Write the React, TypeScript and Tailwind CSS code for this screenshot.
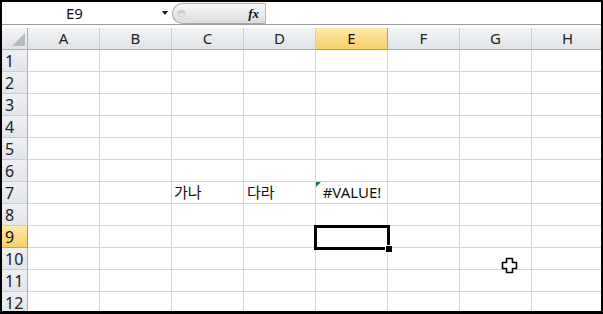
import React from 'react'

const cols = ['A', 'B', 'C', 'D', 'E', 'F', 'G', 'H']
const rows = [1, 2, 3, 4, 5, 6, 7, 8, 9, 10, 11, 12]

const font = { fontFamily: '"Noto Sans", "Noto Sans CJK KR", sans-serif' }

const Cell = ({ row, col }: { row: number; col: string }) => {
  let content: React.ReactNode = null
  if (row === 7 && col === 'C') content = <span className="pl-[2px]">가나</span>
  if (row === 7 && col === 'D') content = <span className="pl-[3px]">다라</span>
  if (row === 7 && col === 'E')
    content = (
      <>
        {/* error indicator */}
        <div className="absolute left-0 top-0 h-0 w-0 border-t-[5px] border-r-[5px] border-t-[#1f7a37] border-r-transparent" />
        <span className="w-full text-center pl-[1px]">#VALUE!</span>
      </>
    )
  return (
    <div className="relative flex h-[22px] items-center border-b border-r border-[#d4d4d4] bg-white text-[15px] leading-none text-[#111]">
      {content}
      {row === 9 && col === 'E' && (
        <div className="absolute -left-[2px] -top-[1px] z-10 h-[25px] w-[76px] border-[3px] border-black">
          <div className="absolute -bottom-[5px] -right-[5px] h-[7px] w-[7px] border-l border-t border-white bg-black" />
        </div>
      )}
    </div>
  )
}

const App: React.FC = () => {
  return (
    <div className="h-[314px] w-[603px] bg-black pt-[2px] pl-[2px] pr-[2px] pb-[3px]" style={font}>
      <div className="relative h-full w-full overflow-hidden bg-white">
        {/* formula bar */}
        <div className="flex h-[23px] border-b border-[#9a9a9a]">
          <div className="flex w-[155px] items-center justify-center pr-[10px] text-[15px] text-[#111]">E9</div>
          <div className="flex w-[15px] items-center justify-center">
            <div className="h-0 w-0 border-l-[3px] border-r-[3px] border-t-[4px] border-l-transparent border-r-transparent border-t-[#111]" />
          </div>
          <div className="relative mt-[1px] flex w-[94px] items-center justify-end rounded-l-full border border-r-[#b8b8b8] border-[#a8a8a8] bg-gradient-to-b from-[#f8f8f8] to-[#dcdcdc] pr-[6px]">
            <div className="absolute left-[4px] top-[6px] h-[7px] w-[9px] rounded-full bg-gradient-to-b from-[#c8c8c8] to-[#eeeeee] border border-[#d0d0d0]" />
            <span className="text-[13px] font-bold italic text-[#111]" style={{ fontFamily: '"Liberation Serif", serif' }}>
              fx
            </span>
          </div>
          <div className="flex-1 bg-white" />
        </div>
        <div className="h-[3px] bg-white" />
        {/* sheet grid */}
        <div className="grid grid-cols-[26px_repeat(8,72px)]">
          <div className="relative h-[22px] border-b border-r border-[#a9afb8] bg-gradient-to-b from-[#f3f4f6] to-[#e0e3e7]">
            <div className="absolute right-[2px] bottom-[3px] h-0 w-0 border-b-[13px] border-l-[13px] border-b-[#b7bbc1] border-l-transparent" />
          </div>
          {cols.map((c) =>
            c === 'E' ? (
              <div
                key={c}
                className="flex h-[22px] items-center justify-center border-b border-r border-b-[#c2913b] border-r-[#c9a35a] bg-gradient-to-b from-[#fdeaa8] to-[#f8cf68] text-[15px] text-[#111]"
              >
                {c}
              </div>
            ) : (
              <div
                key={c}
                className="flex h-[22px] items-center justify-center border-b border-r border-b-[#a9afb8] border-r-[#c8ccd2] bg-gradient-to-b from-[#f3f4f6] to-[#e0e3e7] text-[15px] text-[#222]"
              >
                {c}
              </div>
            )
          )}
          {rows.map((r) => (
            <React.Fragment key={r}>
              {r === 9 ? (
                <div className="flex h-[22px] items-center border-b border-r border-b-[#c9a35a] border-r-[#c2913b] bg-gradient-to-b from-[#fdeaa8] to-[#f8cf68] pl-[3px] text-[16px] text-[#111]">
                  {r}
                </div>
              ) : (
                <div className="flex h-[22px] items-center border-b border-r border-b-[#c8ccd2] border-r-[#a9afb8] bg-gradient-to-b from-[#eef0f3] to-[#e2e5e9] pl-[3px] text-[16px] text-[#222]">
                  {r}
                </div>
              )}
              {cols.map((c) => (
                <Cell key={c} row={r} col={c} />
              ))}
            </React.Fragment>
          ))}
        </div>
        {/* mouse cursor */}
        <svg className="absolute left-[499px] top-[255px] z-20" width="17" height="17" viewBox="0 0 17 17">
          <path
            d="M5.5 1.5h6v4h4v6h-4v4h-6v-4h-4v-6h4z"
            fill="#fff"
            stroke="#000"
            strokeWidth="1.6"
            strokeLinejoin="round"
          />
        </svg>
      </div>
    </div>
  )
}

export default App
